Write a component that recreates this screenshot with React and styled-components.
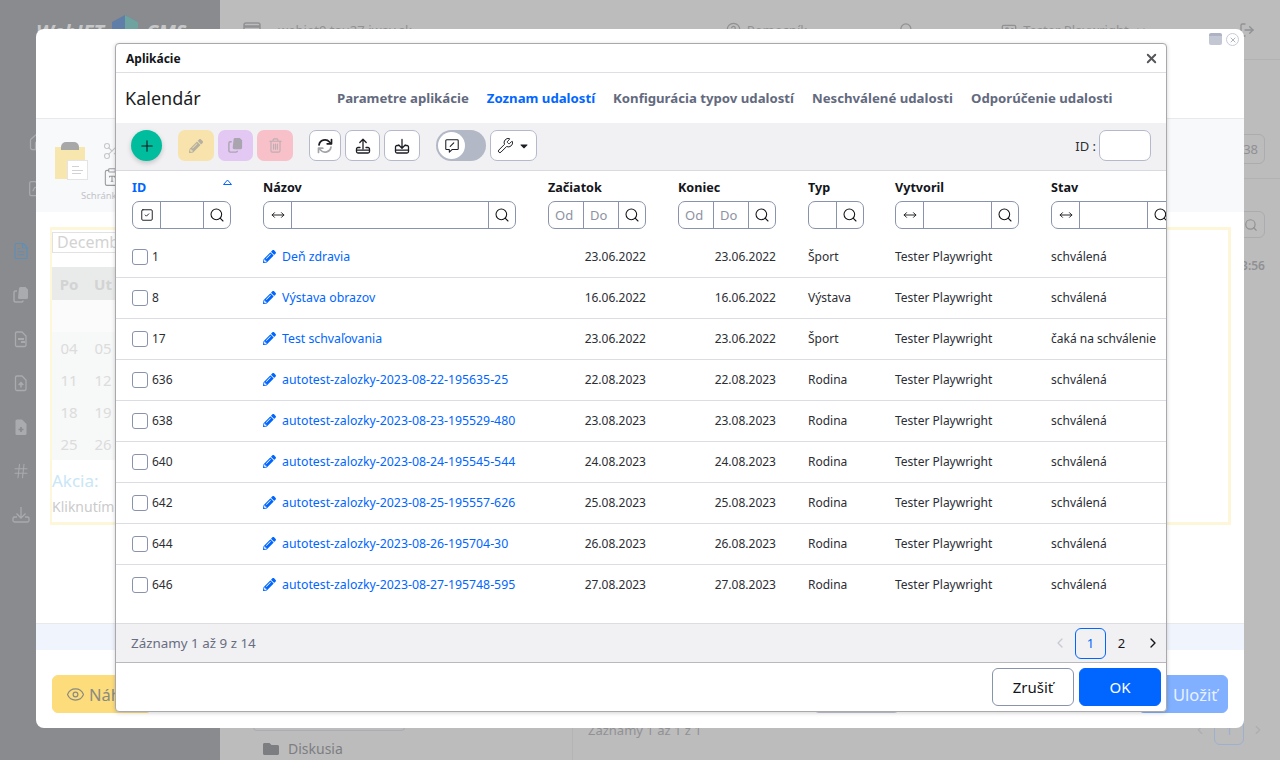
import React from 'react';
import styled, { createGlobalStyle } from 'styled-components';
import {
  Search, Plus, ChevronLeft, ChevronRight, ChevronDown, X, Eye, Check as CheckIcon, Wrench, MoveHorizontal, SquareCheck, House, FolderOpen,
  FileText, Hash, CircleHelp, LogOut, Scissors, ClipboardType, IdCard,
} from 'lucide-react';
import { FaPencilAlt, FaFolder, FaCaretDown } from 'react-icons/fa';

const Global = createGlobalStyle`
  html, body { margin: 0; padding: 0; }
  body { font-family: "Noto Sans", "Liberation Sans", sans-serif; color: #13151a; overflow: hidden; }
  * { box-sizing: border-box; }
`;

const Page = styled.div`
  position: relative;
  display: flex;
  width: 1280px;
  height: 760px;
  overflow: hidden;
  background: #bcbcbc;
`;

const Sidebar = styled.aside`
  width: 220px;
  background: #8a8b8e;
  padding-top: 15px;
  flex: none;
`;

const Logo = styled.div`
  display: flex;
  align-items: flex-end;
  padding-left: 36px;
  height: 30px;
  color: #c5c6c8;
  font-size: 20px;
  line-height: 26px;
  font-weight: 700;
  font-style: italic;
`;

const LogoPart = styled.span`
  width: ${(p) => p.$w}px;
  flex: none;
`;

const LogoCube = styled.svg`
  flex: none;
  margin: 0 8px 0 5px;
  align-self: flex-start;
`;

const Nav = styled.nav`
  display: flex;
  flex-direction: column;
  padding-top: ${(p) => p.$top}px;
  padding-left: ${(p) => p.$left}px;
  gap: ${(p) => p.$gap}px;
  color: ${(p) => p.$color || '#a9abae'};
`;

const NavIcon = styled.div`
  height: 20px;
  display: flex;
  align-items: center;
  color: ${(p) => p.$color || 'inherit'};
`;

const Main = styled.main`
  flex: 1;
  display: flex;
  flex-direction: column;
  color: #909194;
`;

const TopBar = styled.header`
  height: 60px;
  flex: none;
  display: flex;
  align-items: center;
  padding: 0 25px 0 23px;
  border-bottom: 1px solid #b2b2b2;
  font-size: 13px;
`;

const TopItem = styled.div`
  display: flex;
  align-items: center;
  gap: 6px;
  margin-left: ${(p) => (p.$left === undefined ? 'auto' : `${p.$left}px`)};
`;

const Columns = styled.div`
  flex: 1;
  display: flex;
`;

const TreePane = styled.div`
  width: 353px;
  display: flex;
  flex-direction: column;
  justify-content: flex-end;
  padding: 0 0 2px 43px;
  border-right: 1px solid #b4b4b4;
`;

const TreeBar = styled.div`
  width: 152px;
  height: 4px;
  margin-left: -10px;
  margin-bottom: 8px;
  border: 1px solid #acacb4;
  border-top: 0;
  border-radius: 0 0 6px 6px;
`;

const TreeItem = styled.div`
  display: flex;
  align-items: center;
  gap: 9px;
  font-size: 14px;
  color: #7d7e82;
`;

const TablePane = styled.div`
  flex: 1;
  display: flex;
  flex-direction: column;
  padding: 74px 15px 15px 15px;
`;

const PaneTop = styled.div`
  height: 15px;
  border-bottom: 1px solid #b2b2b2;
  margin-right: -15px;
`;

const GhostBox = styled.div`
  width: ${(p) => p.$w}px;
  height: ${(p) => p.$h}px;
  margin-top: ${(p) => p.$top || 0}px;
  border: 1px solid #acacb0;
  border-radius: 6px;
  display: flex;
  align-items: center;
  justify-content: flex-end;
  padding-right: 6px;
  font-size: 13px;
  align-self: flex-end;
`;

const GhostTime = styled.div`
  align-self: flex-end;
  margin-top: 19px;
  font-size: 12px;
  font-weight: 600;
`;

const PaneBottom = styled.div`
  margin-top: auto;
  display: flex;
  align-items: center;
  justify-content: space-between;
  font-size: 13px;
`;

const GhostPager = styled.div`
  display: flex;
  align-items: center;
  gap: 7px;
  color: #acaeb4;
`;

const GhostPage = styled.div`
  width: 30px;
  height: 30px;
  border: 1px solid #9db0ce;
  border-radius: 6px;
  color: #9db0ce;
  display: flex;
  align-items: center;
  justify-content: center;
`;

const Win = styled.section`
  position: absolute;
  left: 36px;
  top: 29px;
  width: 1208px;
  height: 699px;
  background: #fff;
  border-radius: 8px;
  display: flex;
  flex-direction: column;
`;

const WinHead = styled.div`
  height: 90px;
  flex: none;
  display: flex;
  justify-content: flex-end;
  gap: 4px;
  padding: 3px 5px 0 0;
  border-bottom: 1px solid #e9e9ec;
`;

const WinMin = styled.div`
  width: 13px;
  height: 12px;
  margin-top: 1px;
  border-radius: 2px;
  background: #c3c6d3;
  border-top: 3px solid #aeb2c4;
`;

const WinClose = styled.div`
  width: 13px;
  height: 13px;
  margin-top: 1px;
  border-radius: 50%;
  border: 1px solid #c8cbd6;
  color: #b0b3c0;
  display: flex;
  align-items: center;
  justify-content: center;
`;

const Ribbon = styled.div`
  height: 93px;
  flex: none;
  background: #f8f9fb;
  padding: 28px 0 0 19px;
  display: flex;
  gap: 17px;
  position: relative;
`;

const Clip = styled.div`
  position: relative;
  width: 30px;
  height: 32px;
  background: #f7e6ad;
`;

const ClipTop = styled.div`
  position: absolute;
  left: 6px;
  top: -5px;
  width: 18px;
  height: 8px;
  background: #a8a8a8;
  border-radius: 5px 5px 0 0;
`;

const ClipPage = styled.div`
  position: absolute;
  right: -3px;
  bottom: -1px;
  width: 21px;
  height: 20px;
  padding: 5px 4px;
  background: #fff;
  border: 1px solid #e4e4e4;
  display: flex;
  flex-direction: column;
  gap: 3px;
`;

const ClipLine = styled.span`
  height: 1px;
  width: ${(p) => p.$w}px;
  background: #d2d2d2;
`;

const RibbonTools = styled.div`
  display: flex;
  flex-direction: column;
  gap: 6px;
  margin-top: -6px;
  color: #c6c7c9;
`;

const RibbonLabel = styled.span`
  position: absolute;
  left: 45px;
  top: 70px;
  font-size: 9.500px;
  color: #c2c3c6;
`;

const WinBody = styled.div`
  flex: 1;
  padding: 15px 13px 0 14px;
`;

const Calendar = styled.div`
  height: 298px;
  border: 3px solid #fdf6d8;
  border-left-width: 2px;
  padding: 2px 0;
`;

const MonthInput = styled.div`
  width: 200px;
  height: 21px;
  border: 1px solid #e2e2e2;
  padding-left: 4px;
  font-size: 16px;
  line-height: 19px;
  color: #d3d3d3;
`;

const CalHead = styled.div`
  display: grid;
  grid-template-columns: 34px 34px;
  width: 400px;
  margin-top: 14px;
  height: 33px;
  background: #e9eaea;
  align-items: center;
  font-size: 15px;
  font-weight: 700;
  color: #d2d3d3;
  text-align: center;
`;

const CalRow = styled.div`
  display: grid;
  grid-template-columns: 34px 34px;
  width: 400px;
  height: 32px;
  background: #f7f8f8;
  align-items: center;
  font-size: 15px;
  color: #dcdcdc;
  text-align: center;
`;

const CalBlank = styled.div`
  width: 400px;
  height: 32px;
  background: #fbfbfb;
`;

const Akcia = styled.div`
  margin-top: 10px;
  font-size: 17px;
  line-height: 22px;
  color: #c8e6f6;
`;

const Note = styled.div`
  margin-top: 5px;
  font-size: 14px;
  line-height: 20px;
  color: #cbcbcb;
`;

const Stripe = styled.div`
  height: 27px;
  flex: none;
  background: #f0f4fc;
  border-top: 1px solid #e9e9ec;
`;

const WinFoot = styled.div`
  height: 78px;
  flex: none;
  display: flex;
  justify-content: space-between;
  padding: 25px 16px 0;
`;

const FootGroup = styled.div`
  display: flex;
  gap: 238px;
`;

const FootBtn = styled.div`
  height: 38px;
  width: ${(p) => p.$w}px;
  border-radius: 6px;
  background: ${(p) => p.$bg};
  border: 1px solid ${(p) => p.$line || p.$bg};
  color: ${(p) => p.$color};
  display: flex;
  align-items: center;
  gap: ${(p) => p.$gap || 4}px;
  padding-left: 13px;
  font-size: 16.500px;
`;

const Dialog = styled.div`
  position: absolute;
  left: 79px;
  top: 14px;
  width: 1052px;
  height: 669px;
  background: #fff;
  border: 1px solid #a9a9ab;
  border-radius: 4px;
  box-shadow: 0 1px 4px rgba(0, 0, 0, 0.18);
  display: flex;
  flex-direction: column;
  overflow: hidden;
`;

const TitleBar = styled.div`
  height: 29px;
  flex: none;
  display: flex;
  align-items: center;
  justify-content: space-between;
  padding: 0 7px 0 10px;
  border-bottom: 1px solid #dedfe4;
  font-size: 12px;
  font-weight: 700;
`;

const CloseBtn = styled.div`
  display: flex;
  color: #55565a;
  margin-top: 1px;
`;

const Head = styled.div`
  height: 50px;
  flex: none;
  display: flex;
  align-items: center;
  padding-left: 9px;
`;

const Heading = styled.h1`
  width: 212px;
  margin: 0;
  font-size: 18px;
  font-weight: 400;
  color: #1c1e24;
`;

const Tabs = styled.div`
  display: flex;
  gap: 18px;
`;

const Tab = styled.span`
  font-size: 13.200px;
  font-weight: 700;
  color: ${(p) => (p.$active ? '#0066ff' : '#636a7e')};
`;

const Toolbar = styled.div`
  height: 48px;
  flex: none;
  display: flex;
  align-items: center;
  padding: 0 15px 2px;
  background: #f1f1f4;
  border-bottom: 1px solid #d9dae1;
`;

const AddBtn = styled.div`
  width: 31px;
  height: 31px;
  border-radius: 50%;
  background: #00bd9d;
  color: #12141a;
  display: flex;
  align-items: center;
  justify-content: center;
  box-shadow: 0 2px 5px rgba(0, 0, 0, 0.2);
  margin-right: 16px;
`;

const SoftBtn = styled.div`
  width: ${(p) => p.$w}px;
  height: 31px;
  margin-right: ${(p) => p.$gap || 4}px;
  border-radius: 7px;
  background: ${(p) => p.$bg};
  color: ${(p) => p.$color};
  display: flex;
  align-items: center;
  justify-content: center;
`;

const LineBtn = styled.div`
  width: ${(p) => p.$w}px;
  height: 31px;
  margin-right: ${(p) => p.$gap || 4}px;
  border-radius: 7px;
  background: #fff;
  border: 1px solid #b4bacb;
  color: #1c1e24;
  display: flex;
  align-items: center;
  justify-content: center;
  gap: 4px;
`;

const Switch = styled.div`
  width: 50px;
  height: 31px;
  margin-right: 4px;
  border-radius: 16px;
  background: #b3b8c6;
  padding: 2px;
`;

const Knob = styled.div`
  width: 27px;
  height: 27px;
  border-radius: 50%;
  background: #fff;
  display: flex;
  align-items: center;
  justify-content: center;
  color: #1c1e24;
`;

const IdGroup = styled.label`
  margin-left: auto;
  display: flex;
  align-items: center;
  gap: 3px;
  font-size: 13px;
  color: #2c2e34;
`;

const IdInput = styled.div`
  width: 52px;
  height: 31px;
  border: 1px solid #b4bacb;
  border-radius: 7px;
  background: #fff;
`;

const Grid = styled.div`
  display: grid;
  grid-template-columns: 131px 285px 130px 130px 87px 156px 140px;
  padding-left: 16px;
  width: 1100px;
`;

const HeadGrid = styled(Grid)`
  height: 65px;
  flex: none;
  padding-top: 8px;
`;

const ColHead = styled.div`
  position: relative;
  display: flex;
  flex-direction: column;
  gap: 4px;
`;

const ColName = styled.div`
  font-size: 12.600px;
  line-height: 18px;
  font-weight: 700;
  color: ${(p) => (p.$active ? '#0066ff' : '#13151a')};
`;

const SortMark = styled.svg`
  position: absolute;
  left: 91px;
  top: 0;
`;

const Filter = styled.div`
  display: flex;
  width: ${(p) => p.$w}px;
  height: 28px;
  border: 1px solid #8a93ad;
  border-radius: 7px;
  background: #fff;
`;

const FilterCell = styled.div`
  width: ${(p) => (p.$w ? `${p.$w}px` : 'auto')};
  flex: ${(p) => (p.$w ? 'none' : 1)};
  display: flex;
  align-items: center;
  justify-content: ${(p) => (p.$text ? 'flex-start' : 'center')};
  padding-left: ${(p) => (p.$text ? 6 : 0)}px;
  border-left: ${(p) => (p.$first ? '0' : '1px solid #8a93ad')};
  font-size: 13px;
  color: #8d92a2;
`;

const Rows = styled.div`
  flex: none;
  padding-top: 1px;
`;

const Row = styled(Grid)`
  height: 41px;
  align-items: center;
  padding-bottom: 1px;
  font-size: 12px;
  color: #2c2e34;
  border-bottom: 1px solid ${(p) => (p.$last ? 'transparent' : '#dcdde3')};
`;

const IdCell = styled.div`
  display: flex;
  align-items: center;
  gap: 4px;
`;

const Check = styled.span`
  width: 16px;
  height: 16px;
  border: 1px solid #8a93ad;
  border-radius: 3px;
  background: #fff;
`;

const NameCell = styled.div`
  display: flex;
  align-items: center;
  gap: 6px;
  font-size: 12.300px;
  color: #0066ff;
`;

const DateCell = styled.div`
  width: 98px;
  text-align: right;
`;

const ListFoot = styled.div`
  margin-top: auto;
  height: 39px;
  flex: none;
  display: flex;
  align-items: center;
  justify-content: space-between;
  padding: 0 0 0 15px;
  background: #f1f1f4;
  border-top: 1px solid #dcdde3;
  font-size: 13.400px;
  color: #686d80;
`;

const Pager = styled.div`
  display: flex;
  align-items: center;
  margin-right: -2px;
`;

const PageBtn = styled.div`
  width: ${(p) => p.$w || 31}px;
  height: 31px;
  border-radius: 6px;
  border: 1px solid ${(p) => (p.$active ? '#0066ff' : 'transparent')};
  color: ${(p) => (p.$active ? '#0066ff' : p.$off ? '#c8cad2' : '#13151a')};
  background: transparent;
  display: flex;
  align-items: center;
  justify-content: center;
  font-size: 13px;
`;

const DialogFoot = styled.div`
  height: 49px;
  flex: none;
  display: flex;
  justify-content: flex-end;
  gap: 5px;
  padding: 5px 5px 0 0;
  border-top: 1px solid #b9b9bd;
`;

const DialogBtn = styled.div`
  width: 82px;
  height: 38px;
  border-radius: 6px;
  background: ${(p) => (p.$primary ? '#0066ff' : '#fff')};
  border: 1px solid ${(p) => (p.$primary ? '#0066ff' : '#8a93ad')};
  color: ${(p) => (p.$primary ? '#fff' : '#13151a')};
  display: flex;
  align-items: center;
  justify-content: center;
  font-size: 15px;
`;

const rows = [
  ['1', 'Deň zdravia', '23.06.2022', 'Šport', 'schválená'],
  ['8', 'Výstava obrazov', '16.06.2022', 'Výstava', 'schválená'],
  ['17', 'Test schvaľovania', '23.06.2022', 'Šport', 'čaká na schválenie'],
  ['636', 'autotest-zalozky-2023-08-22-195635-25', '22.08.2023', 'Rodina', 'schválená'],
  ['638', 'autotest-zalozky-2023-08-23-195529-480', '23.08.2023', 'Rodina', 'schválená'],
  ['640', 'autotest-zalozky-2023-08-24-195545-544', '24.08.2023', 'Rodina', 'schválená'],
  ['642', 'autotest-zalozky-2023-08-25-195557-626', '25.08.2023', 'Rodina', 'schválená'],
  ['644', 'autotest-zalozky-2023-08-26-195704-30', '26.08.2023', 'Rodina', 'schválená'],
  ['646', 'autotest-zalozky-2023-08-27-195748-595', '27.08.2023', 'Rodina', 'schválená'],
];

const calendarRows = [['04', '05'], ['11', '12'], ['18', '19'], ['25', '26']];

const Stroke = ({ size = 18, width = 1.3, children }) => (
  <svg width={size} height={size} viewBox="0 0 18 18" fill="none" stroke="currentColor" strokeWidth={width} strokeLinecap="round" strokeLinejoin="round">
    {children}
  </svg>
);

const SyncIcon = () => (
  <svg width="18" height="18" viewBox="0 0 18 18" fill="none" strokeWidth="1.700" strokeLinecap="round" strokeLinejoin="round">
    <path d="M3 8a6 6 0 0 1 10.500-3l1.500 1.500" stroke="#1c1e24" />
    <path d="M15.500 2.500v4.300h-4.300" stroke="#1c1e24" />
    <path d="M15 10a6 6 0 0 1-10.500 3L3 11.500" stroke="#a3a4a8" />
    <path d="M2.500 15.500v-4.300h4.300" stroke="#a3a4a8" />
  </svg>
);

const UploadIcon = () => (
  <Stroke>
    <path d="M9 12V2.500M5.800 5.500 9 2.300l3.200 3.200" />
    <path d="M6 10.500H4A1.500 1.500 0 0 0 2.500 12v2.500c0 .8.700 1.500 1.500 1.500h10c.8 0 1.500-.7 1.500-1.500V12a1.500 1.500 0 0 0-1.500-1.500h-2" />
    <path d="M2.500 13.200h13" />
  </Stroke>
);

const DownloadIcon = () => (
  <Stroke>
    <path d="M9 2.500V11M5.800 8 9 11.200 12.200 8" />
    <path d="M5.500 8.500H4A1.500 1.500 0 0 0 2.500 10v4.500c0 .8.700 1.500 1.500 1.500h10c.8 0 1.500-.7 1.500-1.500V10A1.500 1.500 0 0 0 14 8.500h-1.500" />
    <path d="M2.500 13.200h13" />
  </Stroke>
);

const CommentIcon = () => (
  <Stroke size={16} width={1.200}>
    <path d="M3 2h12a1 1 0 0 1 1 1v9a1 1 0 0 1-1 1H9l-3 3v-3H3a1 1 0 0 1-1-1V3a1 1 0 0 1 1-1Z" />
    <path d="M7 9.500 11 5.500" />
  </Stroke>
);

const CopyDocs = ({ size = 17 }) => (
  <svg width={size} height={size} viewBox="0 0 18 18" fill="none" stroke="currentColor" strokeWidth="1.500">
    <path d="M7 2.500A1.500 1.500 0 0 1 8.500 1h5L16 3.500v8a1.500 1.500 0 0 1-1.500 1.500h-7A1.500 1.500 0 0 1 6 11.500Z" fill="currentColor" stroke="none" />
    <path d="M5 5H3.500A1.500 1.500 0 0 0 2 6.500v8A1.500 1.500 0 0 0 3.500 16h6a1.500 1.500 0 0 0 1.500-1.500V14.500" />
  </svg>
);

const TrashIcon = () => (
  <Stroke size={17} width={1.200}>
    <path d="M3 4.500h12M6.500 4.500V3a1 1 0 0 1 1-1h3a1 1 0 0 1 1 1v1.500" />
    <path d="M4.200 4.500v10A1.500 1.500 0 0 0 5.700 16h6.600a1.500 1.500 0 0 0 1.500-1.500v-10" />
    <path d="M7 7.500v5.500M9 7.500v5.500M11 7.500v5.500" />
  </Stroke>
);

const DocFilledBar = () => (
  <svg width="18" height="18" viewBox="0 0 18 18" fill="none" stroke="currentColor" strokeWidth="1.300">
    <path d="M5 2h5l4 4v9a1.500 1.500 0 0 1-1.500 1.500h-8A1.500 1.500 0 0 1 3.500 15V3.500A1.500 1.500 0 0 1 5 2Z" />
    <path d="M6 9h6M9 12h4" strokeWidth="2" />
  </svg>
);

const DocArrow = () => (
  <svg width="18" height="18" viewBox="0 0 18 18" fill="none" stroke="currentColor" strokeWidth="1.300">
    <path d="M5 2h5l4 4v9a1.500 1.500 0 0 1-1.500 1.500h-8A1.500 1.500 0 0 1 3.500 15V3.500A1.500 1.500 0 0 1 5 2Z" />
    <path d="M9 13.500V9M6.700 11 9 8.700l2.300 2.300" strokeWidth="1.600" />
  </svg>
);

const DocPlus = () => (
  <svg width="18" height="18" viewBox="0 0 18 18">
    <path d="M5 1.500h5l4.500 4.500v9.500a1.500 1.500 0 0 1-1.500 1.500H5a1.500 1.500 0 0 1-1.500-1.500V3A1.500 1.500 0 0 1 5 1.500Z" fill="currentColor" />
    <path d="M9 9v5M6.500 11.500h5" stroke="#8a8b8e" strokeWidth="1.700" />
  </svg>
);

const TrayDown = () => (
  <svg width="18" height="18" viewBox="0 0 18 18" fill="none" stroke="currentColor" strokeWidth="1.300">
    <path d="M9 1v11M4.500 7.500 9 12l4.500-4.500" />
    <path d="M5 11H2.500A1.500 1.500 0 0 0 1 12.500v2A1.500 1.500 0 0 0 2.500 16h13a1.500 1.500 0 0 0 1.500-1.500v-2a1.500 1.500 0 0 0-1.500-1.500H13" />
  </svg>
);

const WindowIcon = () => (
  <svg width="18" height="16" viewBox="0 0 18 16" fill="none" stroke="currentColor" strokeWidth="1.500">
    <rect x="1" y="1" width="16" height="14" rx="2" />
    <path d="M1 4.500h16" strokeWidth="2.500" />
  </svg>
);

const SearchBox = ({ w = 27 }) => (
  <FilterCell $w={w}>
    <Search size={16} color="#13151a" strokeWidth={1.6} />
  </FilterCell>
);

const SwapCell = () => (
  <FilterCell $w={27} $first>
    <MoveHorizontal size={14} color="#13151a" strokeWidth={1.6} />
  </FilterCell>
);

const App = () => (
  <>
    <Global />
    <Page>
      <Sidebar>
        <Logo>
          <LogoPart $w={40}>Web</LogoPart>
          <LogoPart $w={31}>JET</LogoPart>
          <LogoCube width="26" height="30" viewBox="0 0 26 30">
            <path d="M13 0 26 7v8l-13 7L0 15V7Z" fill="#5f7ea8" />
            <path d="M13 0 26 7v8l-13 7Z" fill="#6fa3a0" />
          </LogoCube>
          <LogoPart $w={42}>CMS</LogoPart>
        </Logo>
        <Nav $top={87} $left={28} $gap={27}>
          <NavIcon><House size={20} strokeWidth={1.5} /></NavIcon>
          <NavIcon><FolderOpen size={20} strokeWidth={1.5} /></NavIcon>
        </Nav>
        <Nav $top={42} $left={12} $gap={24}>
          <NavIcon $color="#5f8fb5"><FileText size={18} strokeWidth={1.6} /></NavIcon>
          <NavIcon><CopyDocs size={18} /></NavIcon>
          <NavIcon><DocFilledBar /></NavIcon>
          <NavIcon><DocArrow /></NavIcon>
          <NavIcon><DocPlus /></NavIcon>
          <NavIcon><Hash size={18} strokeWidth={1.4} /></NavIcon>
          <NavIcon><TrayDown /></NavIcon>
        </Nav>
      </Sidebar>
      <Main>
        <TopBar>
          <TopItem $left={0}><WindowIcon /></TopItem>
          <TopItem $left={17}>webjet9.tau27.iway.sk</TopItem>
          <TopItem $left={314}><CircleHelp size={15} /> Pomocník</TopItem>
          <TopItem $left={92}><Search size={15} /></TopItem>
          <TopItem $left={87}><IdCard size={16} /> Tester Playwright <ChevronDown size={12} /></TopItem>
          <TopItem><LogOut size={16} /></TopItem>
        </TopBar>
        <Columns>
          <TreePane>
            <TreeBar />
            <TreeItem><FaFolder size={16} /> Diskusia</TreeItem>
          </TreePane>
          <TablePane>
            <GhostBox $w={40} $h={30}>38</GhostBox>
            <PaneTop />
            <GhostBox $w={40} $h={27} $top={32}><Search size={14} /></GhostBox>
            <GhostTime>13:56</GhostTime>
            <PaneBottom>
              <span>Záznamy 1 až 1 z 1</span>
              <GhostPager>
                <ChevronLeft size={14} />
                <GhostPage>1</GhostPage>
                <ChevronRight size={14} />
              </GhostPager>
            </PaneBottom>
          </TablePane>
        </Columns>
      </Main>

      <Win>
        <WinHead>
          <WinMin />
          <WinClose><X size={8} strokeWidth={3} /></WinClose>
        </WinHead>
        <Ribbon>
          <Clip>
            <ClipTop />
            <ClipPage>
              <ClipLine $w={7} />
              <ClipLine $w={11} />
              <ClipLine $w={9} />
            </ClipPage>
          </Clip>
          <RibbonTools>
            <Scissors size={20} strokeWidth={1.3} />
            <ClipboardType size={20} strokeWidth={1.3} color="#9a9b9e" />
          </RibbonTools>
          <RibbonLabel>Schránka</RibbonLabel>
        </Ribbon>
        <WinBody>
          <Calendar>
            <MonthInput>December</MonthInput>
            <CalHead><span>Po</span><span>Ut</span></CalHead>
            <CalBlank />
            {calendarRows.map((cells) => (
              <CalRow key={cells[0]}>
                <span>{cells[0]}</span>
                <span>{cells[1]}</span>
              </CalRow>
            ))}
            <Akcia>Akcia:</Akcia>
            <Note>Kliknutím</Note>
          </Calendar>
        </WinBody>
        <Stripe />
        <WinFoot>
          <FootBtn $w={100} $bg="#fddc7c" $color="#8a8a80"><Eye size={19} strokeWidth={1.5} /> Náhľad</FootBtn>
          <FootGroup>
            <FootBtn $w={87} $bg="#fff" $line="#c4c8d6" $color="#8a8a80" />
            <FootBtn $w={90} $bg="#80b0ff" $color="#e8f0ff" $gap={7}><CheckIcon size={14} /> Uložiť</FootBtn>
          </FootGroup>
        </WinFoot>

        <Dialog>
          <TitleBar>
            Aplikácie
            <CloseBtn><X size={15} strokeWidth={3} /></CloseBtn>
          </TitleBar>
          <Head>
            <Heading>Kalendár</Heading>
            <Tabs>
              <Tab>Parametre aplikácie</Tab>
              <Tab $active>Zoznam udalostí</Tab>
              <Tab>Konfigurácia typov udalostí</Tab>
              <Tab>Neschválené udalosti</Tab>
              <Tab>Odporúčenie udalosti</Tab>
            </Tabs>
          </Head>
          <Toolbar>
            <AddBtn><Plus size={18} strokeWidth={1.4} /></AddBtn>
            <SoftBtn $w={36} $bg="#f7e3ab" $color="#b5b0a0"><FaPencilAlt size={14} /></SoftBtn>
            <SoftBtn $w={35} $bg="#e3c8f3" $color="#a9a5ae"><CopyDocs /></SoftBtn>
            <SoftBtn $w={36} $bg="#f8c0c8" $color="#bcaeb2" $gap={16}><TrashIcon /></SoftBtn>
            <LineBtn $w={32}><SyncIcon /></LineBtn>
            <LineBtn $w={35}><UploadIcon /></LineBtn>
            <LineBtn $w={36} $gap={16}><DownloadIcon /></LineBtn>
            <Switch><Knob><CommentIcon /></Knob></Switch>
            <LineBtn $w={47}><Wrench size={17} strokeWidth={1.4} /><FaCaretDown size={12} /></LineBtn>
            <IdGroup>ID : <IdInput /></IdGroup>
          </Toolbar>
          <HeadGrid>
            <ColHead>
              <ColName $active>ID</ColName>
              <SortMark width="9" height="6" viewBox="0 0 9 6" fill="none" stroke="#0066ff">
                <path d="M.5 5.500h8L4.500 1Z" />
              </SortMark>
              <Filter $w={99}>
                <FilterCell $w={27} $first><SquareCheck size={14} color="#13151a" strokeWidth={1.6} /></FilterCell>
                <FilterCell />
                <SearchBox />
              </Filter>
            </ColHead>
            <ColHead>
              <ColName>Názov</ColName>
              <Filter $w={253}><SwapCell /><FilterCell /><SearchBox /></Filter>
            </ColHead>
            <ColHead>
              <ColName>Začiatok</ColName>
              <Filter $w={98}><FilterCell $first $text>Od</FilterCell><FilterCell $text>Do</FilterCell><SearchBox /></Filter>
            </ColHead>
            <ColHead>
              <ColName>Koniec</ColName>
              <Filter $w={98}><FilterCell $first $text>Od</FilterCell><FilterCell $text>Do</FilterCell><SearchBox /></Filter>
            </ColHead>
            <ColHead>
              <ColName>Typ</ColName>
              <Filter $w={56}><FilterCell $first /><SearchBox /></Filter>
            </ColHead>
            <ColHead>
              <ColName>Vytvoril</ColName>
              <Filter $w={124}><SwapCell /><FilterCell /><SearchBox /></Filter>
            </ColHead>
            <ColHead>
              <ColName>Stav</ColName>
              <Filter $w={124}><SwapCell /><FilterCell /><SearchBox /></Filter>
            </ColHead>
          </HeadGrid>
          <Rows>
            {rows.map(([id, name, date, type, state], index) => (
              <Row key={id} $last={index === rows.length - 1}>
                <IdCell><Check /> {id}</IdCell>
                <NameCell><FaPencilAlt size={13} /> {name}</NameCell>
                <DateCell>{date}</DateCell>
                <DateCell>{date}</DateCell>
                <div>{type}</div>
                <div>Tester Playwright</div>
                <div>{state}</div>
              </Row>
            ))}
          </Rows>
          <ListFoot>
            Záznamy 1 až 9 z 14
            <Pager>
              <PageBtn $off><ChevronLeft size={16} /></PageBtn>
              <PageBtn $active>1</PageBtn>
              <PageBtn>2</PageBtn>
              <PageBtn><ChevronRight size={16} /></PageBtn>
            </Pager>
          </ListFoot>
          <DialogFoot>
            <DialogBtn>Zrušiť</DialogBtn>
            <DialogBtn $primary>OK</DialogBtn>
          </DialogFoot>
        </Dialog>
      </Win>
    </Page>
  </>
);

export default App;
